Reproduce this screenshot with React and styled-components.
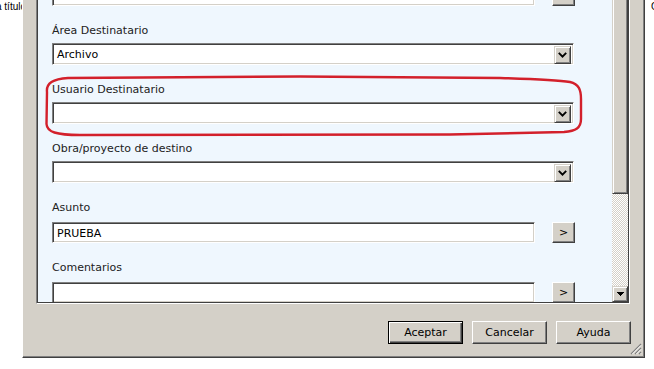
import React from 'react';
import styled, { createGlobalStyle, css } from 'styled-components';

const GlobalStyle = createGlobalStyle`
  html, body { margin: 0; padding: 0; background: #fff; }
  body {
    width: 654px;
    height: 369px;
    overflow: hidden;
    font-family: "DejaVu Sans", "Liberation Sans", sans-serif;
  }
`;

const uiFont = css`
  font-family: "DejaVu Sans", "Liberation Sans", sans-serif;
  font-size: 11px;
`;

const sunken = css`
  box-sizing: border-box;
  border-style: solid;
  border-width: 1px;
  border-color: #808080 #fff #fff #808080;
  box-shadow: inset 1px 1px 0 #404040, inset -1px -1px 0 #d4d0c8;
  background: #fff;
`;

const raised = css`
  box-sizing: border-box;
  border-style: solid;
  border-width: 1px;
  border-color: #fff #404040 #404040 #fff;
  box-shadow: inset -1px -1px 0 #808080;
  background: #d4d0c8;
`;

const Desktop = styled.div`
  position: relative;
  display: flex;
  align-items: flex-start;
  width: 654px;
  height: 369px;
  background: #fff;
  overflow: hidden;
`;

const BackText = styled.div`
  flex: none;
  box-sizing: border-box;
  width: ${(p) => p.$w}px;
  padding-top: 1px;
  padding-left: ${(p) => p.$pl || 0}px;
  overflow: hidden;
  white-space: nowrap;
  font: 10px/12px "Liberation Sans", Arial, sans-serif;
  color: #000;
`;

const Shifted = styled.span`
  display: inline-block;
  margin-left: ${(p) => p.$ml}px;
`;

const Dialog = styled.div`
  position: relative;
  flex: none;
  box-sizing: border-box;
  width: 623px;
  height: 358px;
  display: flex;
  flex-direction: column;
  padding: 0 14px 13px 13px;
  background: #d4d0c8;
  border-left: 1px solid #fff;
  border-right: 1px solid #404040;
  border-bottom: 1px solid #404040;
  box-shadow: inset -1px -1px 0 #808080;
`;

const Panel = styled.div`
  flex: none;
  height: 304px;
  box-sizing: border-box;
  display: flex;
  border-left: 1px solid #808080;
  border-right: 1px solid #fff;
  border-bottom: 1px solid #fff;
`;

const PanelInner = styled.div`
  flex: 1;
  min-width: 0;
  display: flex;
  border-left: 1px solid #404040;
  border-right: 1px solid #404040;
  border-bottom: 1px solid #404040;
`;

const Content = styled.div`
  flex: 1;
  min-width: 0;
  overflow: hidden;
  background: #eff7fe;
  padding-left: 14px;
`;

const Form = styled.div`
  display: flex;
  flex-direction: column;
  margin-top: -37px;
`;

const Field = styled.div`
  display: flex;
  flex-direction: column;
  margin-bottom: 17px;
`;

const Label = styled.div`
  ${uiFont};
  height: 15px;
  line-height: 15px;
  color: #222;
  margin-bottom: ${(p) => p.$gap}px;
`;

const Select = styled.div`
  ${sunken};
  width: 522px;
  height: 22px;
  padding: 2px;
  display: flex;
`;

const SelectValue = styled.div`
  flex: 1;
  ${uiFont};
  line-height: 18px;
  padding-left: 2px;
  color: #000;
`;

const DropButton = styled.div`
  ${raised};
  border-color: #d4d0c8 #404040 #404040 #d4d0c8;
  box-shadow: inset 1px 1px 0 #fff, inset -1px -1px 0 #808080;
  width: 17px;
  height: 18px;
  display: flex;
  align-items: center;
  justify-content: center;
`;

const TextRow = styled.div`
  display: flex;
  align-items: flex-start;
`;

const TextInput = styled.div`
  ${sunken};
  width: 483px;
  height: 21px;
  padding: 2px 2px 0 4px;
  ${uiFont};
  line-height: 17px;
  color: #000;
`;

const SmallButton = styled.div`
  ${raised};
  width: 23px;
  height: 21px;
  margin-left: 17px;
  display: flex;
  align-items: center;
  justify-content: center;
  ${uiFont};
  color: #000;
`;

const ScrollBar = styled.div`
  flex: none;
  width: 16px;
  display: flex;
  flex-direction: column;
`;

const Thumb = styled.div`
  ${raised};
  border-top: none;
  border-color: #d4d0c8 #404040 #404040 #d4d0c8;
  box-shadow: inset 1px 0 0 #fff, inset -1px -1px 0 #808080;
  height: 194px;
`;

const Track = styled.div`
  flex: 1;
  background: repeating-conic-gradient(#d4d0c8 0 25%, #fff 0 50%) 0 0 / 2px 2px;
`;

const ArrowButton = styled.div`
  ${raised};
  border-color: #d4d0c8 #404040 #404040 #d4d0c8;
  box-shadow: inset 1px 1px 0 #fff, inset -1px -1px 0 #808080;
  height: 16px;
  display: flex;
  align-items: center;
  justify-content: center;
`;

const ButtonRow = styled.div`
  display: flex;
  justify-content: flex-end;
  gap: 9px;
  margin-top: 17px;
  margin-right: -1px;
`;

const DialogButton = styled.div`
  ${raised};
  width: 75px;
  height: 23px;
  display: flex;
  align-items: center;
  justify-content: center;
  ${uiFont};
  color: #000;
  ${(p) =>
    p.$default &&
    css`
      border-color: #000;
      box-shadow: inset 1px 1px 0 #fff, inset -1px -1px 0 #404040, inset -2px -2px 0 #808080;
    `}
`;

const Grip = styled.svg`
  position: absolute;
  right: 2px;
  bottom: 2px;
`;

const Annotation = styled.svg`
  position: absolute;
  left: 0;
  top: 0;
  pointer-events: none;
`;

const Chevron = () => (
  <svg width="9" height="6" viewBox="0 0 9 6">
    <path d="M0.8 0.8 L4.5 4.6 L8.2 0.8" fill="none" stroke="#000" strokeWidth="1.9" />
  </svg>
);

const DownTriangle = () => (
  <svg width="7" height="4" viewBox="0 0 7 4">
    <path d="M0 0h7v1h-1v1h-1v1h-1v1h-1v-1h-1v-1h-1v-1h-1z" fill="#000" />
  </svg>
);

const SelectField = ({ label, value }) => (
  <Field>
    <Label $gap={5}>{label}</Label>
    <Select>
      <SelectValue>{value}</SelectValue>
      <DropButton>
        <Chevron />
      </DropButton>
    </Select>
  </Field>
);

const TextField = ({ label, value }) => (
  <Field>
    <Label $gap={7}>{label}</Label>
    <TextRow>
      <TextInput>{value}</TextInput>
      <SmallButton>&gt;</SmallButton>
    </TextRow>
  </Field>
);

export default function App() {
  return (
    <>
      <GlobalStyle />
      <Desktop>
        <BackText $w={22}>
          <Shifted $ml={-4}>a título</Shifted>
        </BackText>
        <Dialog>
          <Panel>
            <PanelInner>
              <Content>
                <Form>
                  <TextField label="" value="" />
                  <SelectField label="Área Destinatario" value="Archivo" />
                  <SelectField label="Usuario Destinatario" value="" />
                  <SelectField label="Obra/proyecto de destino" value="" />
                  <TextField label="Asunto" value="PRUEBA" />
                  <TextField label="Comentarios" value="" />
                </Form>
              </Content>
              <ScrollBar>
                <Thumb />
                <Track />
                <ArrowButton>
                  <DownTriangle />
                </ArrowButton>
              </ScrollBar>
            </PanelInner>
          </Panel>
          <ButtonRow>
            <DialogButton $default>Aceptar</DialogButton>
            <DialogButton>Cancelar</DialogButton>
            <DialogButton>Ayuda</DialogButton>
          </ButtonRow>
          <Grip width="12" height="12" viewBox="0 0 12 12">
            <path d="M11 1L1 11M11 5L5 11M11 9L9 11" stroke="#808080" strokeWidth="1.2" />
            <path d="M11 2.4L2.4 11M11 6.4L6.4 11M11 10.4L10.4 11" stroke="#fff" strokeWidth="1" />
          </Grip>
        </Dialog>
        <BackText $w={9} $pl={6}>Co</BackText>
        <Annotation width="654" height="369" viewBox="0 0 654 369">
          <path
            d="M47 92 C46 83 53 79 68 78 L300 76.5 L500 78 C535 79 558 80 570 82 C579 84 581 90 581 99 L581 119 C581 128 576 131 564 132 L450 134.5 L80 135 C56 135 47 132 46.5 124 Z"
            fill="none"
            stroke="#d3202b"
            strokeWidth="2.4"
          />
        </Annotation>
      </Desktop>
    </>
  );
}
